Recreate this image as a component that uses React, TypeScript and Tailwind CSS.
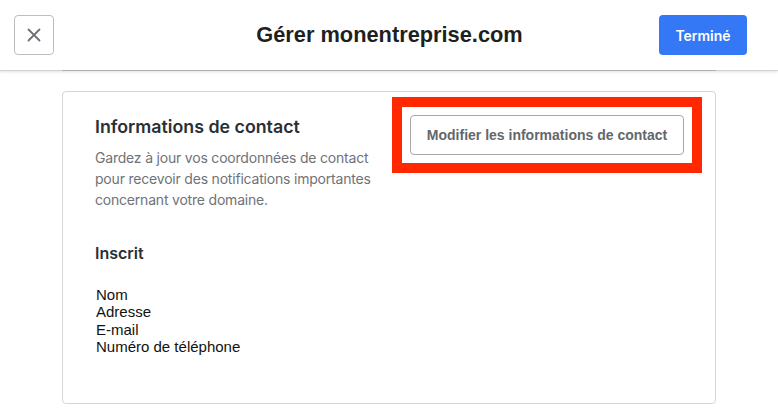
import React from "react";

export default function App() {
  return (
    <div className="w-[778px] h-[420px] bg-white overflow-hidden relative">
      <header className="relative z-10 h-[71px] grid grid-cols-[1fr_auto_1fr] items-center pl-[14px] pr-[31px] bg-white border-b border-[#d4d4d4] shadow-[0_1px_3px_rgba(0,0,0,0.12)]">
        <button className="justify-self-start w-[40px] h-[40px] rounded-[4px] border border-[#bdbdbd] flex items-center justify-center">
          <svg width="14" height="14" viewBox="0 0 14 14" fill="none">
            <path d="M1.5 1.5L12.5 12.5M12.5 1.5L1.5 12.5" stroke="#6b6f75" strokeWidth="1.8" strokeLinecap="round" />
          </svg>
        </button>
        <h1 className="ml-[18px] font-['Liberation_Sans',Arial,sans-serif] font-bold text-[21.8px] text-[#1f1f1f]">
          Gérer monentreprise.com
        </h1>
        <button className="justify-self-end w-[88px] h-[40px] rounded-[4px] bg-[#3478f6] text-white text-[14px] font-semibold font-['Inter',sans-serif]">
          Terminé
        </button>
      </header>
      <div className="relative z-20 mx-[62px] -mt-[1px] w-[654px] h-px bg-[#b0b0b0]" />
      <div className="mx-[62px] mt-[20px] w-[654px] h-[313px] border border-[#d6d6d6] rounded-[4px] flex">
        <div className="pl-[32px] pt-[23px] w-[320px] font-['Inter',sans-serif]">
          <h2 className="text-[17.8px] leading-[24px] font-semibold text-[#2a2f36]">Informations de contact</h2>
          <p className="mt-[8px] text-[14px] tracking-[-0.2px] leading-[21px] text-[#6f7378] w-[290px]">
            Gardez à jour vos coordonnées de contact pour recevoir des notifications importantes concernant votre domaine.
          </p>
          <h3 className="mt-[31px] text-[16px] leading-[24px] font-semibold text-[#2a2f36]">Inscrit</h3>
          <div className="mt-[21px] pl-[1px] text-[15px] leading-[17.4px] text-[#111] font-['Liberation_Sans',Arial,sans-serif]">
            <div>Nom</div>
            <div>Adresse</div>
            <div>E-mail</div>
            <div>Numéro de téléphone</div>
          </div>
        </div>
        <div className="ml-auto mr-[13px] mt-[5px] self-start border-[10px] border-[#ff2800] p-[8px]">
          <button className="w-[274px] h-[40px] rounded-[4px] border border-[#a8a8a8] bg-white text-[14px] font-bold text-[#63676c] font-['Liberation_Sans',Arial,sans-serif]">
            Modifier les informations de contact
          </button>
        </div>
      </div>
    </div>
  );
}
